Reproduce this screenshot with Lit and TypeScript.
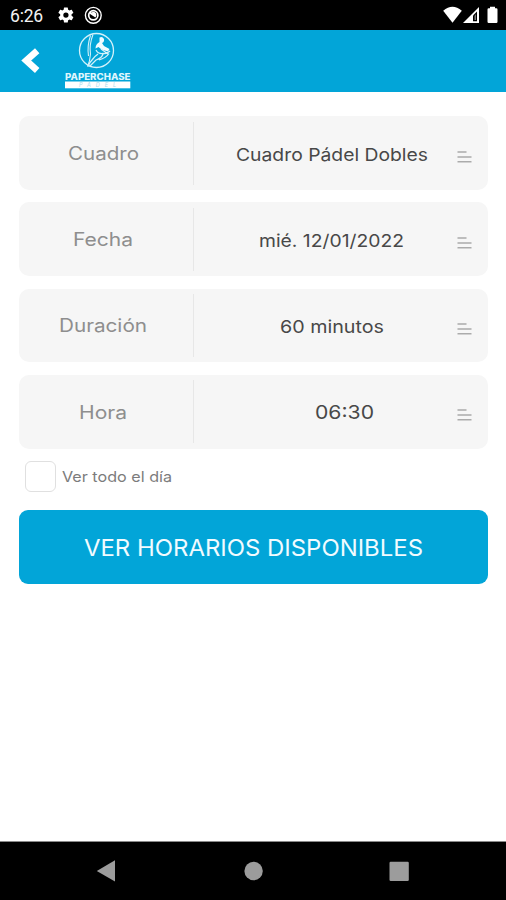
import { LitElement, html, css, svg } from "lit";
import { customElement, property } from "lit/decorators.js";

/* One line of text fitted to a given advance width. */
@customElement("fit-text")
class FitText extends LitElement {
  @property() text = "";
  @property({ type: Number }) width = 100;
  @property({ type: Number }) size = 18;

  static styles = css`
    :host { display: block; flex: none; }
    svg { display: block; overflow: visible; }
    text { font-family: Inter, "Open Sans", sans-serif; fill: currentColor; }
  `;

  render() {
    const h = Math.round(this.size * 1.3);
    return html`<svg width=${this.width} height=${h}>
      ${svg`<text x="0" y=${h / 2 + this.size * 0.364 + 0.6} font-size=${this.size}
        textLength=${this.width} lengthAdjust="spacingAndGlyphs">${this.text}</text>`}
    </svg>`;
  }
}

@customElement("field-row")
class FieldRow extends LitElement {
  @property() label = "";
  @property() value = "";
  @property({ type: Number }) labelWidth = 70;
  @property({ type: Number }) valueWidth = 100;
  @property({ type: Number }) valueSize = 17.6;
  @property({ type: Boolean, reflect: true }) wide = false;

  static styles = css`
    :host {
      display: flex; align-items: center; height: 73.8px; box-sizing: border-box;
      background: #f6f6f6; border-radius: 10px;
    }
    .label { width: 174px; padding-right: 6px; box-sizing: border-box; display: flex; justify-content: center; color: #8e8e8e; }
    .rule { width: 1px; height: 63px; background: #e7e7e7; }
    .value { flex: 1; display: flex; justify-content: center; padding-left: 12px; color: #484848; }
    :host([wide]) .value { padding-left: 37px; }
    .lines { width: 15px; height: 12px; margin: 7px 16px 0 0; display: block; }
  `;

  render() {
    return html`
      <div class="label"><fit-text .text=${this.label} .width=${this.labelWidth} .size=${18.4}></fit-text></div>
      <div class="rule"></div>
      <div class="value"><fit-text .text=${this.value} .width=${this.valueWidth} .size=${this.valueSize}></fit-text></div>
      <svg class="lines" viewBox="0 0 15 12" stroke="#ababab" stroke-width="1.5">
        <path d="M0.500 1H9.500M0.500 6H14.500M0.500 10.700H14.500" />
      </svg>`;
  }
}

@customElement("app-root")
class AppRoot extends LitElement {
  static styles = css`
    :host {
      display: flex; flex-direction: column; width: 506px; height: 900px;
      background: #fff; overflow: hidden; font-family: Inter, sans-serif;
    }
    .status { height: 30px; flex: none; background: #000; color: #fff; display: flex; align-items: center; box-sizing: border-box; }
    .clock { font: 400 17.5px/30px Roboto, sans-serif; margin-left: 10px; width: 47px; padding-top: 2px; letter-spacing: -0.2px; color: #f2f2f2; }
    .status svg, .head svg, .nav svg { display: block; flex: none; }
    .spacer { flex: 1; }
    .head { height: 61.5px; flex: none; background: #02a5d8; display: flex; align-items: flex-start; }
    .back { margin: 18px 0 0 21px; }
    .logo { margin: 2px 0 0 24px; }
    .logo text { font-family: Inter, sans-serif; }
    .form { flex: 1; padding: 24.7px 18px 0 19px; display: flex; flex-direction: column; gap: 12.4px; }
    .check { display: flex; align-items: center; height: 31px; padding-left: 6px; gap: 6px; color: #7c7c7c; }
    .box { width: 31px; height: 31px; box-sizing: border-box; border: 1.5px solid #e0e0e0; border-radius: 6px; background: #fff; }
    .button {
      margin-top: 6px; height: 73.5px; border: 0; border-radius: 9px; padding: 0;
      background: #02a5d8; color: #f1fbff; display: flex; align-items: center; justify-content: center;
    }
    .nav { height: 58px; flex: none; background: #000; box-shadow: 0 -1px #8a8a8a; }
  `;

  render() {
    return html`
      <div class="status">
        <span class="clock">6:26</span>
        <svg width="18" height="18" viewBox="0 0 24 24" fill="#fff"><path d="M19.4 13a7.5 7.5 0 0 0 0-2l2.2-1.7a.5.5 0 0 0 .1-.6l-2.1-3.6a.5.5 0 0 0-.6-.2l-2.5 1a7.7 7.7 0 0 0-1.7-1l-.4-2.600a.5.5 0 0 0-.5-.4H9.800a.5.5 0 0 0-.5.4l-.4 2.600a7.700 7.700 0 0 0-1.700 1l-2.500-1a.5.5 0 0 0-.6.2L2 8.700a.5.5 0 0 0 .1.6L4.300 11a7.500 7.500 0 0 0 0 2l-2.200 1.700a.5.5 0 0 0-.1.6l2.100 3.600c.1.2.4.3.6.2l2.500-1a7.700 7.700 0 0 0 1.700 1l.4 2.600c0 .2.2.4.5.4h4.100c.3 0 .5-.2.5-.4l.4-2.600a7.700 7.700 0 0 0 1.700-1l2.500 1c.2.1.5 0 .6-.2l2.100-3.600a.5.5 0 0 0-.1-.6zM11.900 15.500a3.500 3.500 0 1 1 0-7 3.500 3.500 0 0 1 0 7z"/></svg>
        <svg width="36" height="20" viewBox="0 0 36 20" fill="none" stroke="#fff">
          <circle cx="18.300" cy="10.300" r="7.900" stroke-width="1.400"/>
          <circle cx="18.300" cy="10.300" r="4.600" stroke-width="1.700"/>
          <path d="M14.500 7.300L21 11.500" stroke-width="2.200"/>
          <path d="M16.500 7Q20 6 21.500 9L20.500 11.500Z" fill="#fff" stroke="none"/>
        </svg>
        <span class="spacer"></span>
        <svg width="63" height="30" viewBox="0 0 63 30" fill="#fff">
          <path d="M0.200 10.800Q9.500 2.800 18.800 10.800L9.500 22.700Z"/>
          <path d="M20 23L36 7V23Z"/>
          <path d="M30 15.500L34 11.500V21.300H30Z" fill="#000"/>
          <path d="M31.500 16L33 14V20H31.500Z" fill="#777"/>
          <path d="M44.500 9.500Q44.500 8.300 45.700 8.300H47V6.700H52V8.300H53.300Q54.500 8.300 54.500 9.500V21.800Q54.500 23 53.300 23H45.700Q44.500 23 44.500 21.800Z"/>
        </svg>
      </div>

      <div class="head">
        <svg class="back" width="19" height="26" viewBox="0 0 19 26"><path d="M16.200 2.700L5.200 12.500L16.200 22.500" fill="none" stroke="#fff" stroke-width="6.600"/></svg>
        <svg class="logo" width="68" height="58" viewBox="64 32 68 58" fill="none" stroke="#d3f1fa">
          <circle cx="96.500" cy="50.500" r="17" stroke-width="1.300"/>
          <path d="M93 34.500Q89 45 90.500 54Q90 61 87.500 66.500M90.500 35.500Q87 46 88.500 56" stroke-width="1.100"/>
          <path d="M99.500 37.500Q102.500 36 104 39Q104.500 42 102 43L104 46L109.500 49L108 51.500L101.500 49.500L98.500 47L95.500 48.500Q95.500 44 99.500 42Z" fill="#f0fbff" stroke="none"/>
          <path d="M96 50Q98 54 103 53.500Q107 54 110 51M98 54Q95 56 92 60Q89 63 88 66.500M103 54Q102 58 96 60L90 66M109 53.500Q106 58 99 60M101 49L108 54" stroke-width="1.300"/>
          <text x="65" y="80" font-size="8.600" font-weight="800" textLength="65.500" lengthAdjust="spacingAndGlyphs" fill="#dff6fd" stroke="none">PAPERCHASE</text>
          <rect x="65" y="81.500" width="65.300" height="6.800" fill="#fff" stroke="none"/>
          <text x="79" y="87" font-size="5.500" font-style="italic" textLength="37" lengthAdjust="spacing" fill="#a9dcec" stroke="none">PADEL</text>
        </svg>
      </div>

      <div class="form">
        <field-row label="Cuadro" value="Cuadro Pádel Dobles" .labelWidth=${71} .valueWidth=${192}></field-row>
        <field-row label="Fecha" value="mié. 12/01/2022" .labelWidth=${60} .valueWidth=${145}></field-row>
        <field-row label="Duración" value="60 minutos" .labelWidth=${88} .valueWidth=${104}></field-row>
        <field-row label="Hora" value="06:30" .labelWidth=${48} .valueWidth=${59} .valueSize=${19} wide></field-row>
        <div class="check">
          <span class="box"></span>
          <fit-text .text=${"Ver todo el día"} .width=${110} .size=${14.6}></fit-text>
        </div>
        <button class="button">
          <fit-text .text=${"VER HORARIOS DISPONIBLES"} .width=${339} .size=${23}></fit-text>
        </button>
      </div>

      <div class="nav">
        <svg width="506" height="58" viewBox="0 0 506 58" fill="#9c9c9c">
          <path d="M96.800 29L115 18.300V39.500Z"/>
          <circle cx="253.600" cy="29" r="9.200"/>
          <rect x="389.500" y="19.700" width="19.300" height="19.300" rx="1.200"/>
        </svg>
      </div>`;
  }
}
